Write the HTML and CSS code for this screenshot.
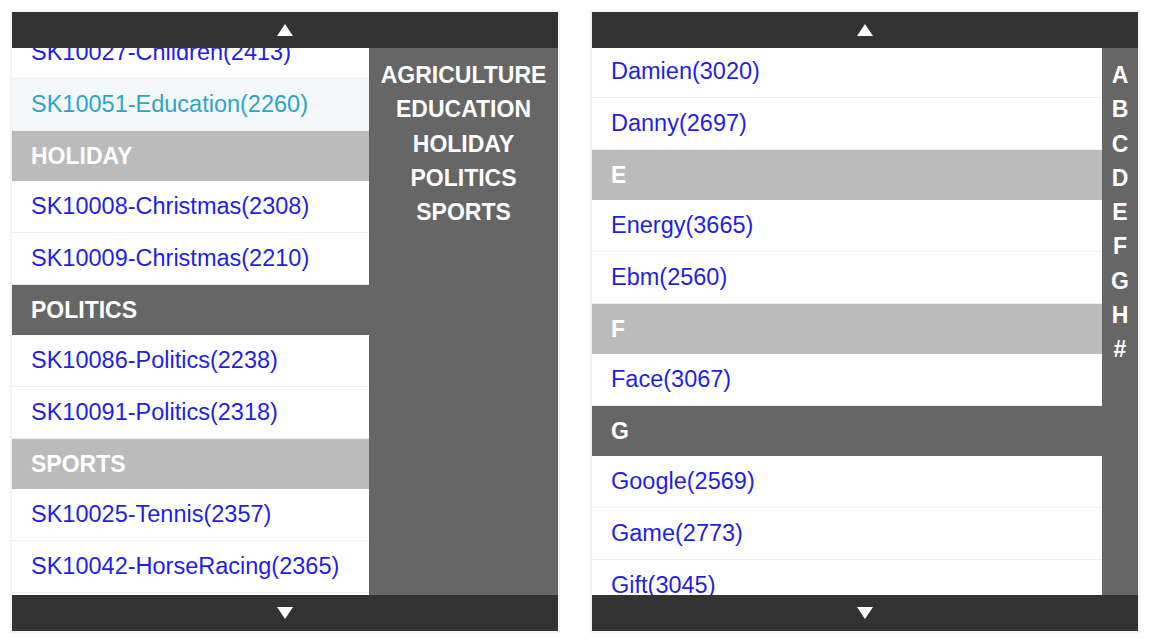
FILE: index.html
```html
<!DOCTYPE html>
<html lang="en">
<head>
    <meta charset="UTF-8">
    <title>Indexed List</title>
    <link rel="stylesheet" href="styles.css">
</head>
<body>
    <div class="page">
        <!-- Lista por categorias -->
        <section class="panel">
            <div class="bar">
                <svg class="arrow" width="16" height="12" viewBox="0 0 16 12"><polygon points="8,0 16,12 0,12" fill="#fff"/></svg>
            </div>
            <div class="body">
                <div class="list">
                    <ul class="list-inner shift-left">
                        <li class="item">SK10027-Children(2413)</li>
                        <li class="item hover">SK10051-Education(2260)</li>
                        <li class="group light">HOLIDAY</li>
                        <li class="item">SK10008-Christmas(2308)</li>
                        <li class="item">SK10009-Christmas(2210)</li>
                        <li class="group dark">POLITICS</li>
                        <li class="item">SK10086-Politics(2238)</li>
                        <li class="item">SK10091-Politics(2318)</li>
                        <li class="group light">SPORTS</li>
                        <li class="item">SK10025-Tennis(2357)</li>
                        <li class="item">SK10042-HorseRacing(2365)</li>
                    </ul>
                </div>
                <nav class="index index-wide">
                    <span>AGRICULTURE</span>
                    <span>EDUCATION</span>
                    <span>HOLIDAY</span>
                    <span>POLITICS</span>
                    <span>SPORTS</span>
                </nav>
            </div>
            <div class="bar">
                <svg class="arrow" width="16" height="12" viewBox="0 0 16 12"><polygon points="0,0 16,0 8,12" fill="#fff"/></svg>
            </div>
        </section>

        <!-- Lista alfabetica -->
        <section class="panel">
            <div class="bar">
                <svg class="arrow" width="16" height="12" viewBox="0 0 16 12"><polygon points="8,0 16,12 0,12" fill="#fff"/></svg>
            </div>
            <div class="body">
                <div class="list">
                    <ul class="list-inner shift-right">
                        <li class="item">Damien(3020)</li>
                        <li class="item">Danny(2697)</li>
                        <li class="group light">E</li>
                        <li class="item">Energy(3665)</li>
                        <li class="item">Ebm(2560)</li>
                        <li class="group light">F</li>
                        <li class="item">Face(3067)</li>
                        <li class="group dark">G</li>
                        <li class="item">Google(2569)</li>
                        <li class="item">Game(2773)</li>
                        <li class="item">Gift(3045)</li>
                    </ul>
                </div>
                <nav class="index index-narrow">
                    <span>A</span>
                    <span>B</span>
                    <span>C</span>
                    <span>D</span>
                    <span>E</span>
                    <span>F</span>
                    <span>G</span>
                    <span>H</span>
                    <span>#</span>
                </nav>
            </div>
            <div class="bar">
                <svg class="arrow" width="16" height="12" viewBox="0 0 16 12"><polygon points="0,0 16,0 8,12" fill="#fff"/></svg>
            </div>
        </section>
    </div>
</body>
</html>
```

FILE: styles.css
```css
/* Estilos generales */
body {
    margin: 0;
    padding: 0;
    background-color: #fff;
    font-family: 'Liberation Sans', Arial, sans-serif;
}

.page {
    display: flex;
    gap: 34px;
    padding: 12px;
}

.panel {
    width: 546px;
    height: 619px;
    display: flex;
    flex-direction: column;
    box-shadow: 0 0 0 2px #f3f3f3;
}

.bar {
    height: 36px;
    flex: none;
    background-color: #333;
    display: flex;
    align-items: center;
    justify-content: center;
}

.arrow {
    display: block;
}

.body {
    flex: 1;
    display: flex;
    overflow: hidden;
}

.list {
    flex: 1;
    overflow: hidden;
    background-color: #fff;
}

.list-inner {
    list-style: none;
    margin: 0;
    padding: 0;
}

.shift-left {
    margin-top: -21px;
}

.shift-right {
    margin-top: -2px;
}

.item {
    box-sizing: border-box;
    height: 52px;
    display: flex;
    align-items: center;
    padding: 0 19px;
    font-size: 23.5px;
    color: #1f1fe6;
    border-bottom: 1px solid #eeeeee;
}

.item.hover {
    background-color: #f4f8fb;
    color: #2aa6c9;
}

.group {
    height: 50px;
    display: flex;
    align-items: center;
    padding: 0 19px;
    font-size: 23px;
    font-weight: bold;
    color: #fff;
}

.group.light {
    background-color: #bbbbbb;
}

.group.dark {
    background-color: #666666;
}

.index {
    flex: none;
    background-color: #666666;
    display: flex;
    flex-direction: column;
    align-items: center;
    padding-top: 10px;
    font-size: 23px;
    font-weight: bold;
    line-height: 34.25px;
    color: #fff;
}

.index-wide {
    width: 189px;
}

.index-narrow {
    width: 36px;
}
```
